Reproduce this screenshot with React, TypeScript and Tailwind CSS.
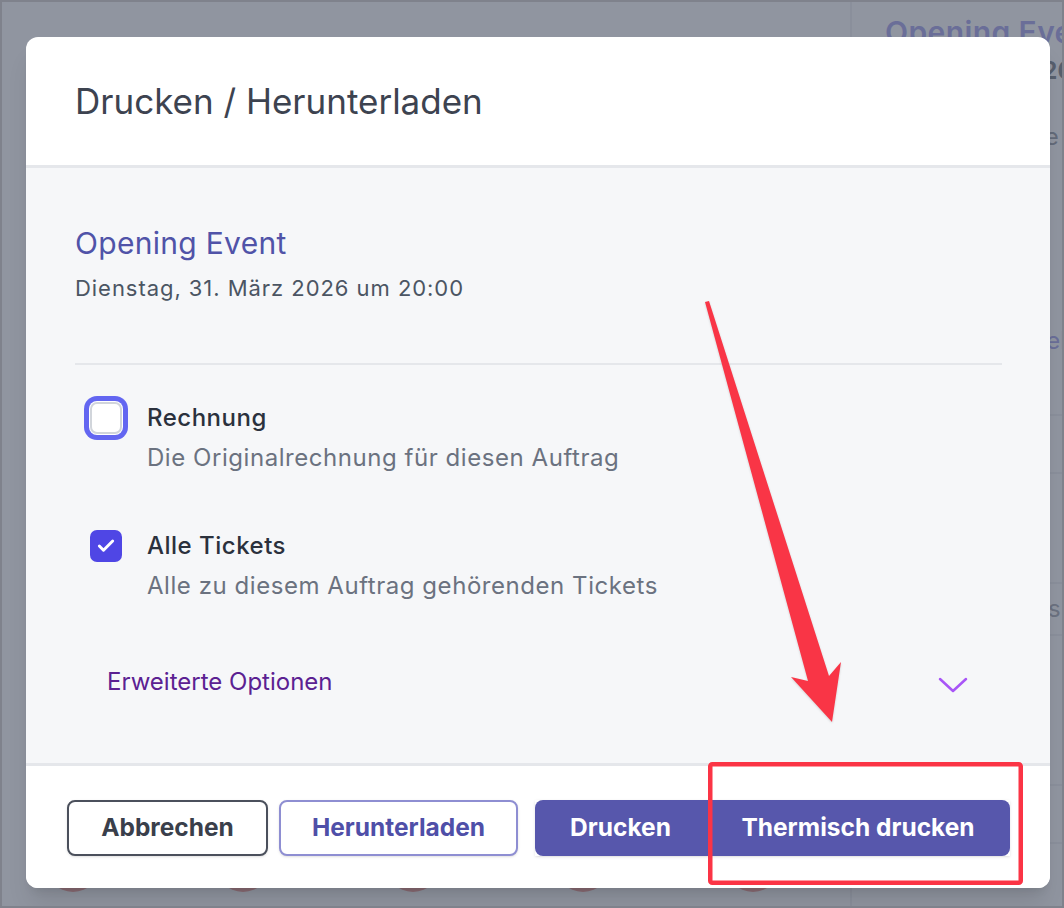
import { Check } from "lucide-react";

function CheckRow({ checked, focused, label, hint, className }: { checked: boolean; focused?: boolean; label: string; hint: string; className?: string }) {
  return (
    <div className={`flex items-start gap-[25px] pl-[15px] ${className ?? ""}`}>
      {checked ? (
        <div className="mt-[-1px] flex h-[32px] w-[32px] shrink-0 items-center justify-center rounded-[7px] bg-[#4f46e5]">
          <Check size={20} strokeWidth={3.5} className="text-white" />
        </div>
      ) : (
        <div
          className={`mt-[-1px] h-[32px] w-[32px] shrink-0 rounded-[7px] border-2 border-[#d1d5db] bg-white ${
            focused ? "ring-[5px] ring-[#6366f1] ring-offset-[1px] ring-offset-white" : ""
          }`}
        />
      )}
      <div>
        <p className="text-[24px] leading-[30px] tracking-[0.5px] font-medium text-[#2b313d]">{label}</p>
        <p className="mt-[10px] text-[24px] leading-[30px] tracking-[0.55px] text-[#6b7280]">{hint}</p>
      </div>
    </div>
  );
}

export default function App() {
  return (
    <div className="relative h-[908px] w-full overflow-hidden border-2 border-[#7f828c] bg-white font-['Inter',sans-serif]">
      {/* page behind the dialog */}
      <div className="flex h-full">
        <div className="flex flex-1 flex-col justify-end pb-[14px] pl-[43px]">
          <div className="flex gap-[114px]">
            <div className="h-[56px] w-[56px] rounded-full bg-[#e85a50]" />
            <div className="h-[56px] w-[56px] rounded-full bg-[#e85a50]" />
            <div className="h-[56px] w-[56px] rounded-full bg-[#e85a50]" />
            <div className="h-[56px] w-[56px] rounded-full bg-[#e85a50]" />
            <div className="h-[56px] w-[56px] rounded-full bg-[#e85a50]" />
          </div>
        </div>
        <aside className="w-[212px] shrink-0 whitespace-nowrap border-l-2 border-[#e5e7eb] pt-[12px]">
          <div className="pl-[33px]">
            <p className="text-[30px] leading-[36px] tracking-[0.4px] font-semibold text-[#6a66e0]">Opening Event</p>
            <p className="mt-[6px] text-[24px] leading-[30px] font-bold text-[#1f2937]">Bestellnr. 12026</p>
            <p className="mt-[36px] text-[24px] leading-[30px] text-[#4b5563]">Bezahlt ( Stripe )</p>
            <p className="mt-[80px] text-[24px] leading-[30px] text-[#1f2937]">Betrag 116,00</p>
            <p className="mt-[64px] text-[24px] leading-[30px] text-[#6a66e0]">Rechnung ansehen</p>
          </div>
          <div className="mt-[58px] h-[2px] bg-[#e5e7eb]" />
          <div className="mt-[56px] h-[2px] bg-[#e5e7eb]" />
          <p className="mt-[64px] pl-[33px] text-[24px] leading-[30px] font-bold text-[#1f2937]">Alle Tickets</p>
          <div className="mt-[14px] h-[2px] bg-[#e5e7eb]" />
          <p className="mt-[10px] pl-[33px] text-[24px] leading-[30px] text-[#6b7280]">Sitzplatz Status</p>
          <div className="mt-[10px] h-[2px] bg-[#e5e7eb]" />
          <p className="mt-[14px] pl-[33px] text-[24px] leading-[30px] text-[#4b5563]">Stehplatz 1</p>
          <div className="mt-[104px] h-[2px] bg-[#e5e7eb]" />
          <div className="mt-[56px] h-[2px] bg-[#e5e7eb]" />
        </aside>
      </div>

      {/* overlay + dialog */}
      <div className="absolute inset-0 bg-[#6b7280]/75 pl-[24px] pt-[35px]">
        <div className="flex w-[1024px] flex-col overflow-hidden rounded-[12px] bg-white shadow-xl">
          <div className="flex h-[131px] items-center border-b-[3px] border-[#e5e7eb] px-[49px]">
            <h1 className="text-[35px] leading-[40px] text-[#3d4350]">Drucken / Herunterladen</h1>
          </div>

          <div className="bg-[#f6f7f9] px-[49px] pb-[66px] pt-[57px]">
            <h2 className="text-[30px] leading-[36px] tracking-[0.3px] text-[#5053a8]">Opening Event</h2>
            <p className="mt-[12px] text-[22px] leading-[30px] tracking-[0.95px] text-[#4b5563]">Dienstag, 31. März 2026 um 20:00</p>
            <div className="mr-[-1px] mt-[60px] h-[2px] bg-[#e5e7eb]" />

            <CheckRow className="mt-[38px]" checked={false} focused label="Rechnung" hint="Die Originalrechnung für diesen Auftrag" />
            <CheckRow className="mt-[58px]" checked label="Alle Tickets" hint="Alle zu diesem Auftrag gehörenden Tickets" />

            <div className="mt-[66px] flex items-center justify-between pl-[32px] pr-[33px]">
              <span className="text-[24px] leading-[30px] text-[#5b2192]">Erweiterte Optionen</span>
              <svg width="30" height="16" viewBox="0 0 30 16" className="mt-[6px]">
                <polyline points="2,2 15,14 28,2" fill="none" stroke="#a855f7" strokeWidth="2.5" strokeLinecap="round" strokeLinejoin="round" />
              </svg>
            </div>
          </div>

          <div className="flex border-t-[3px] border-[#e5e7eb] bg-white pb-[32px] pl-[41px] pt-[34px]">
            <button className="h-[56px] w-[201px] rounded-[8px] border-2 border-[#4b505c] bg-white pb-[2px] text-[24.5px] font-bold text-[#3a3f4b] shadow-sm">
              Abbrechen
            </button>
            <button className="ml-[11px] h-[56px] w-[239px] rounded-[8px] border-2 border-[#8e8ed2] bg-white pb-[2px] text-[24.5px] font-bold text-[#4f4fa8] shadow-sm">
              Herunterladen
            </button>
            <div className="ml-[17px] flex shadow-sm">
              <button className="h-[56px] w-[171px] rounded-l-[8px] bg-[#5757ac] pb-[2px] text-[24.5px] font-bold text-white">Drucken</button>
              <button className="h-[56px] w-[304px] rounded-r-[8px] bg-[#5757ac] pb-[2px] text-[24.5px] font-bold text-white">Thermisch drucken</button>
            </div>
          </div>
        </div>
      </div>

      {/* annotation */}
      <svg width="1064" height="908" viewBox="0 0 1064 908" className="pointer-events-none absolute -left-[2px] -top-[2px]">
        <polygon points="705,302 709,301 829,676 841,662 832,722 791,677 808,681" fill="#f93546" style={{ filter: "drop-shadow(0 1px 1px rgba(0,0,0,0.15))" }} />
        <rect x="710.25" y="764.25" width="310.5" height="118.5" rx="2" fill="none" stroke="#fb3445" strokeWidth="4.5" />
      </svg>
    </div>
  );
}
